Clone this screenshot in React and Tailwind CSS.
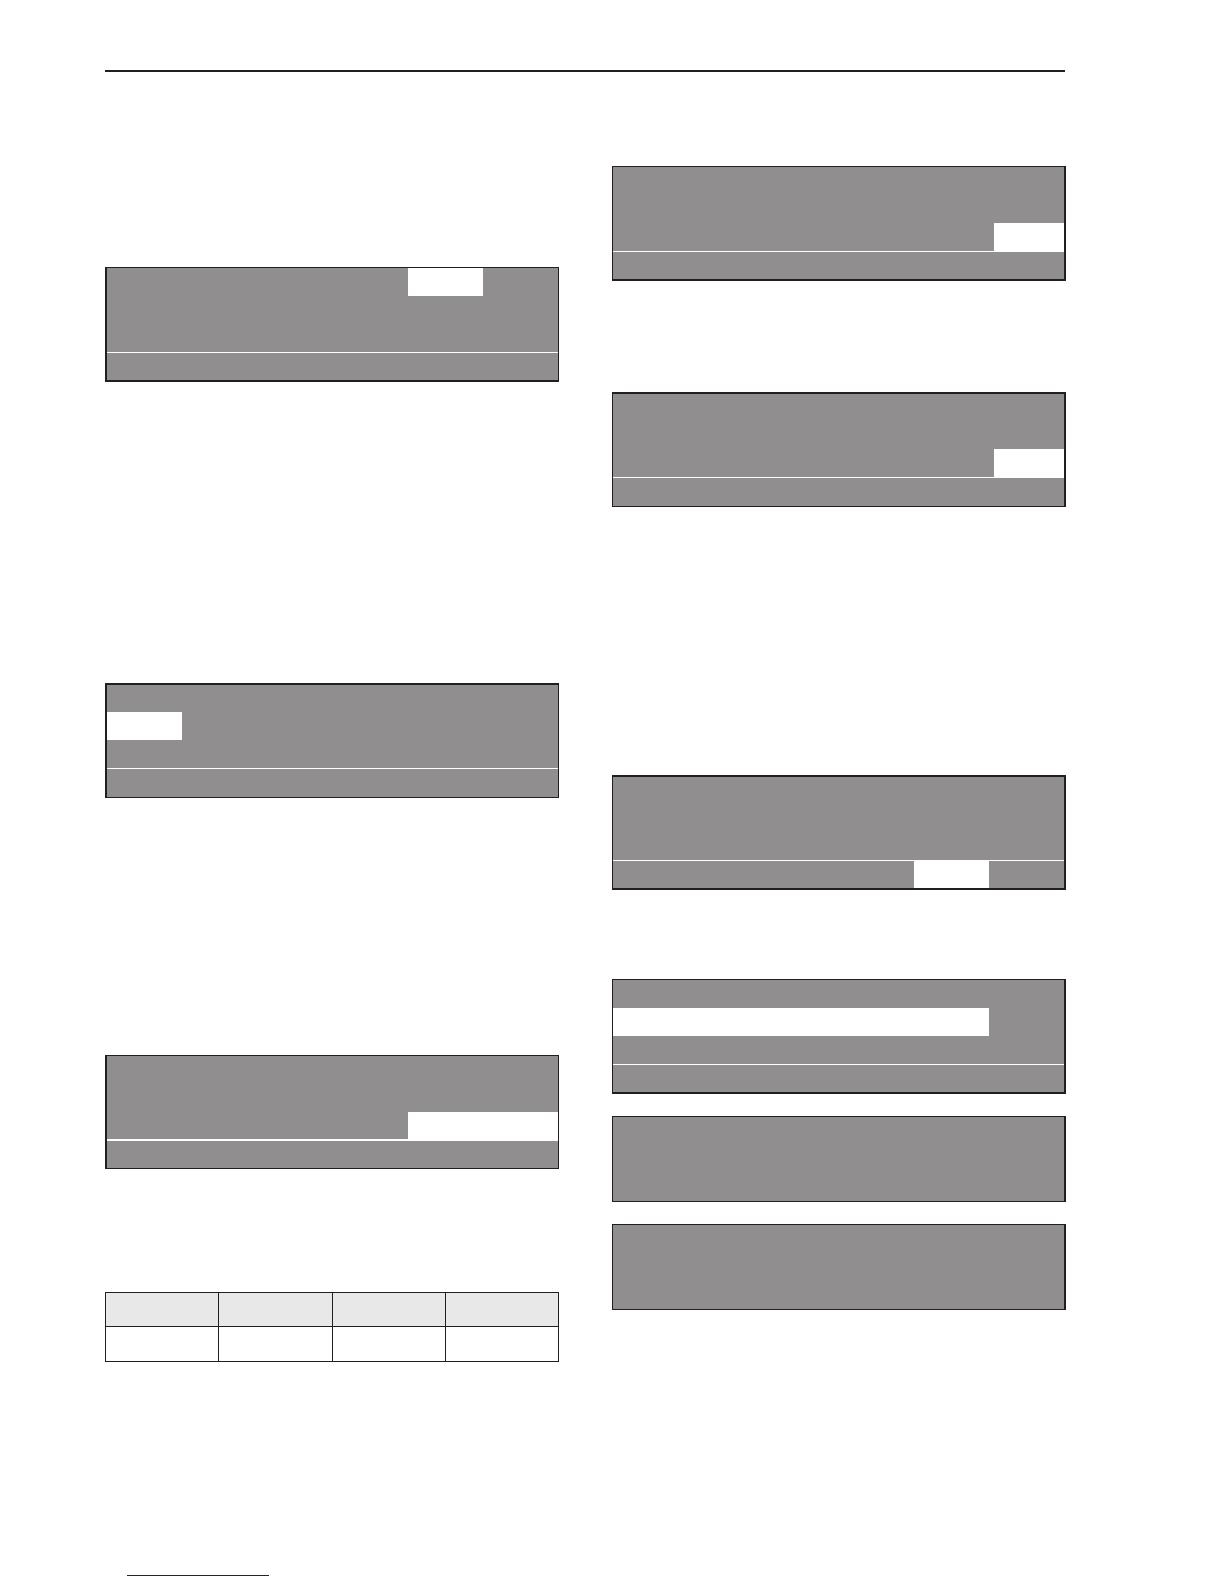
import clsx from 'clsx';

// One line of a display: six character fields, optionally one highlighted span
function DisplayRow({ highlight, className }) {
  return (
    <div className={clsx('grid grid-cols-6', className)}>
      {highlight && <div className={clsx('bg-white', highlight)} />}
    </div>
  );
}

function DisplayPanel({ className, rows, divider = 'h-px', footer = 'h-7', footerHighlight }) {
  return (
    <div className={clsx('border-[#231f20] bg-[#908e8f]', className)}>
      {rows.map((row, index) => (
        <DisplayRow key={index} className={row.height || 'h-7'} highlight={row.highlight} />
      ))}
      {divider && (
        <>
          <div className={clsx('bg-white', divider)} />
          <DisplayRow className={footer} highlight={footerHighlight} />
        </>
      )}
    </div>
  );
}

const leftPanels = [
  {
    className: 'mt-[195px] border-t border-r border-b-2 border-l-2',
    rows: [{ highlight: 'col-start-5' }, {}, {}],
    footer: 'h-[27px]',
  },
  {
    className: 'mt-[301px] border-t-2 border-r border-b border-l-2',
    rows: [{ height: 'h-[27px]' }, { highlight: 'col-start-1' }, {}],
  },
  {
    className: 'mt-[257px] border-t border-r border-b border-l-2',
    rows: [{}, {}, { height: 'h-[27px]', highlight: 'col-start-5 col-span-2' }],
    divider: 'h-[2px]',
    footer: 'h-[27px]',
  },
];

const rightPanels = [
  {
    className: 'mt-[94px] border-t border-r-2 border-b-2 border-l',
    rows: [{}, {}, { highlight: 'col-start-6 ml-auto w-[70px]' }],
    footer: 'h-[27px]',
  },
  {
    className: 'mt-[111px] border-t-2 border-r-2 border-b border-l',
    rows: [{ height: 'h-[27px]' }, {}, { highlight: 'col-start-6 ml-auto w-[70px]' }],
  },
  {
    className: 'mt-[268px] border-t-2 border-r-2 border-b-2 border-l',
    rows: [{ height: 'h-[27px]' }, {}, {}],
    footer: 'h-[27px]',
    footerHighlight: 'col-start-5',
  },
  {
    className: 'mt-[89px] border-t border-r-2 border-b-2 border-l',
    rows: [{}, { highlight: 'col-start-1 col-span-5' }, {}],
    footer: 'h-[27px]',
  },
  {
    className: 'mt-[22px] border-t border-r-2 border-b border-l',
    rows: [{}, {}, {}],
    divider: null,
  },
  {
    className: 'mt-[22px] border-t border-r-2 border-b border-l',
    rows: [{}, {}, {}],
    divider: null,
  },
];

export default function App() {
  return (
    <div className="flex min-h-screen flex-col bg-white pr-[158px] pl-[105px] font-['Liberation_Sans',sans-serif]">
      <header className="mr-px border-b-2 border-[#231f20] pt-[70px]" />

      <main className="flex items-start gap-[53px]">
        <section className="min-w-0 flex-1">
          {leftPanels.map((panel, index) => (
            <DisplayPanel key={index} {...panel} />
          ))}

          <table className="mt-[123px] w-full table-fixed border-collapse">
            <thead>
              <tr className="h-[34px] bg-[#e8e8e8]">
                <th className="border border-[#231f20]" />
                <th className="border border-[#231f20]" />
                <th className="border border-[#231f20]" />
                <th className="border border-[#231f20]" />
              </tr>
            </thead>
            <tbody>
              <tr className="h-[35px]">
                <td className="border border-[#231f20]" />
                <td className="border border-[#231f20]" />
                <td className="border border-[#231f20]" />
                <td className="border border-[#231f20]" />
              </tr>
            </tbody>
          </table>
        </section>

        <section className="min-w-0 flex-1">
          {rightPanels.map((panel, index) => (
            <DisplayPanel key={index} {...panel} />
          ))}
        </section>
      </main>

      <footer className="mt-auto pb-2 pl-[22px]">
        <a href="#" className="flex h-5 w-[142px] items-end">
          <span className="h-px w-full bg-[#1414a0]" />
        </a>
      </footer>
    </div>
  );
}
